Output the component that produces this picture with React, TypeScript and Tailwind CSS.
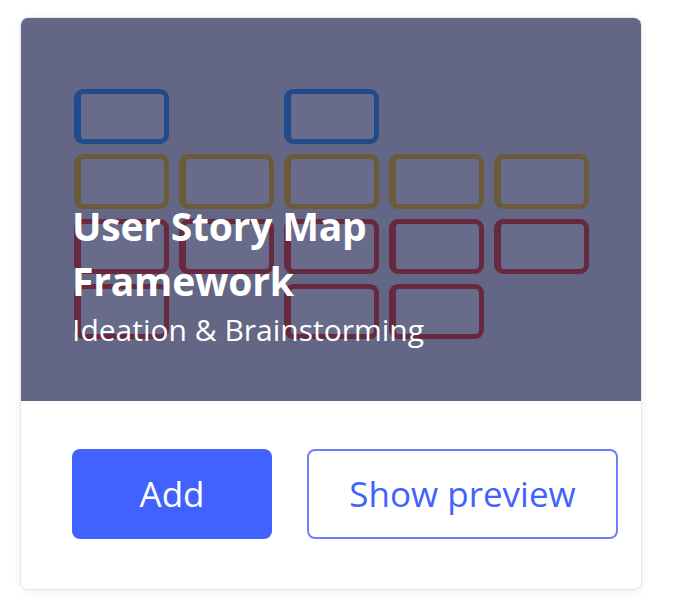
const ROWS = [
  ["blue", null, "blue", null, null],
  ["gold", "gold", "gold", "gold", "gold"],
  ["red", "red", "red", "red", "red"],
  ["red", null, "red", "red", null],
];

const TONE: Record<string, string> = {
  blue: "border-[#1f4b8c]",
  gold: "border-[#6c5b38]",
  red: "border-[#67293f]",
};

function StoryGrid() {
  return (
    <div className="grid grid-cols-[repeat(5,95px)] gap-x-[10px] gap-y-[10px]">
      {ROWS.flatMap((row, r) =>
        row.map((tone, c) =>
          tone ? (
            <div
              key={`${r}-${c}`}
              className={`h-[55px] rounded-[9px] border-[5px] border-l-[7px] bg-[#686c8a] ${TONE[tone]}`}
            />
          ) : (
            <div key={`${r}-${c}`} className="h-[55px]" />
          )
        )
      )}
    </div>
  );
}

export default function App() {
  return (
    <div className="min-h-screen bg-white pt-[17px] pl-[20px] font-['Open_Sans',sans-serif]">
      <div className="w-[622px] overflow-hidden rounded-lg border border-[#e6e6ee] bg-white shadow-[0_2px_10px_rgba(20,20,60,0.06)]">
        {/* preview picture */}
        <div className="relative h-[383px] bg-[#636785] pl-[53px] pt-[71px]">
          <StoryGrid />
          <div className="absolute left-[51px] top-[180px] text-white">
            <div className="text-[39px] font-bold leading-[55px] tracking-[-0.2px]">
              User Story Map
              <br />
              Framework
            </div>
            <div className="mt-[2px] text-[30px] leading-[40px]">Ideation &amp; Brainstorming</div>
          </div>
        </div>

        {/* actions */}
        <div className="flex gap-[35px] pl-[51px] pr-[23px] pt-[48px] pb-[50px]">
          <button className="h-[90px] w-[200px] rounded-lg bg-[#4262ff] text-[35px] text-white">
            Add
          </button>
          <button className="h-[90px] flex-1 rounded-lg border-2 border-[#6d80f7] bg-white text-[35px] text-[#4262ff]">
            Show preview
          </button>
        </div>
      </div>
    </div>
  );
}
